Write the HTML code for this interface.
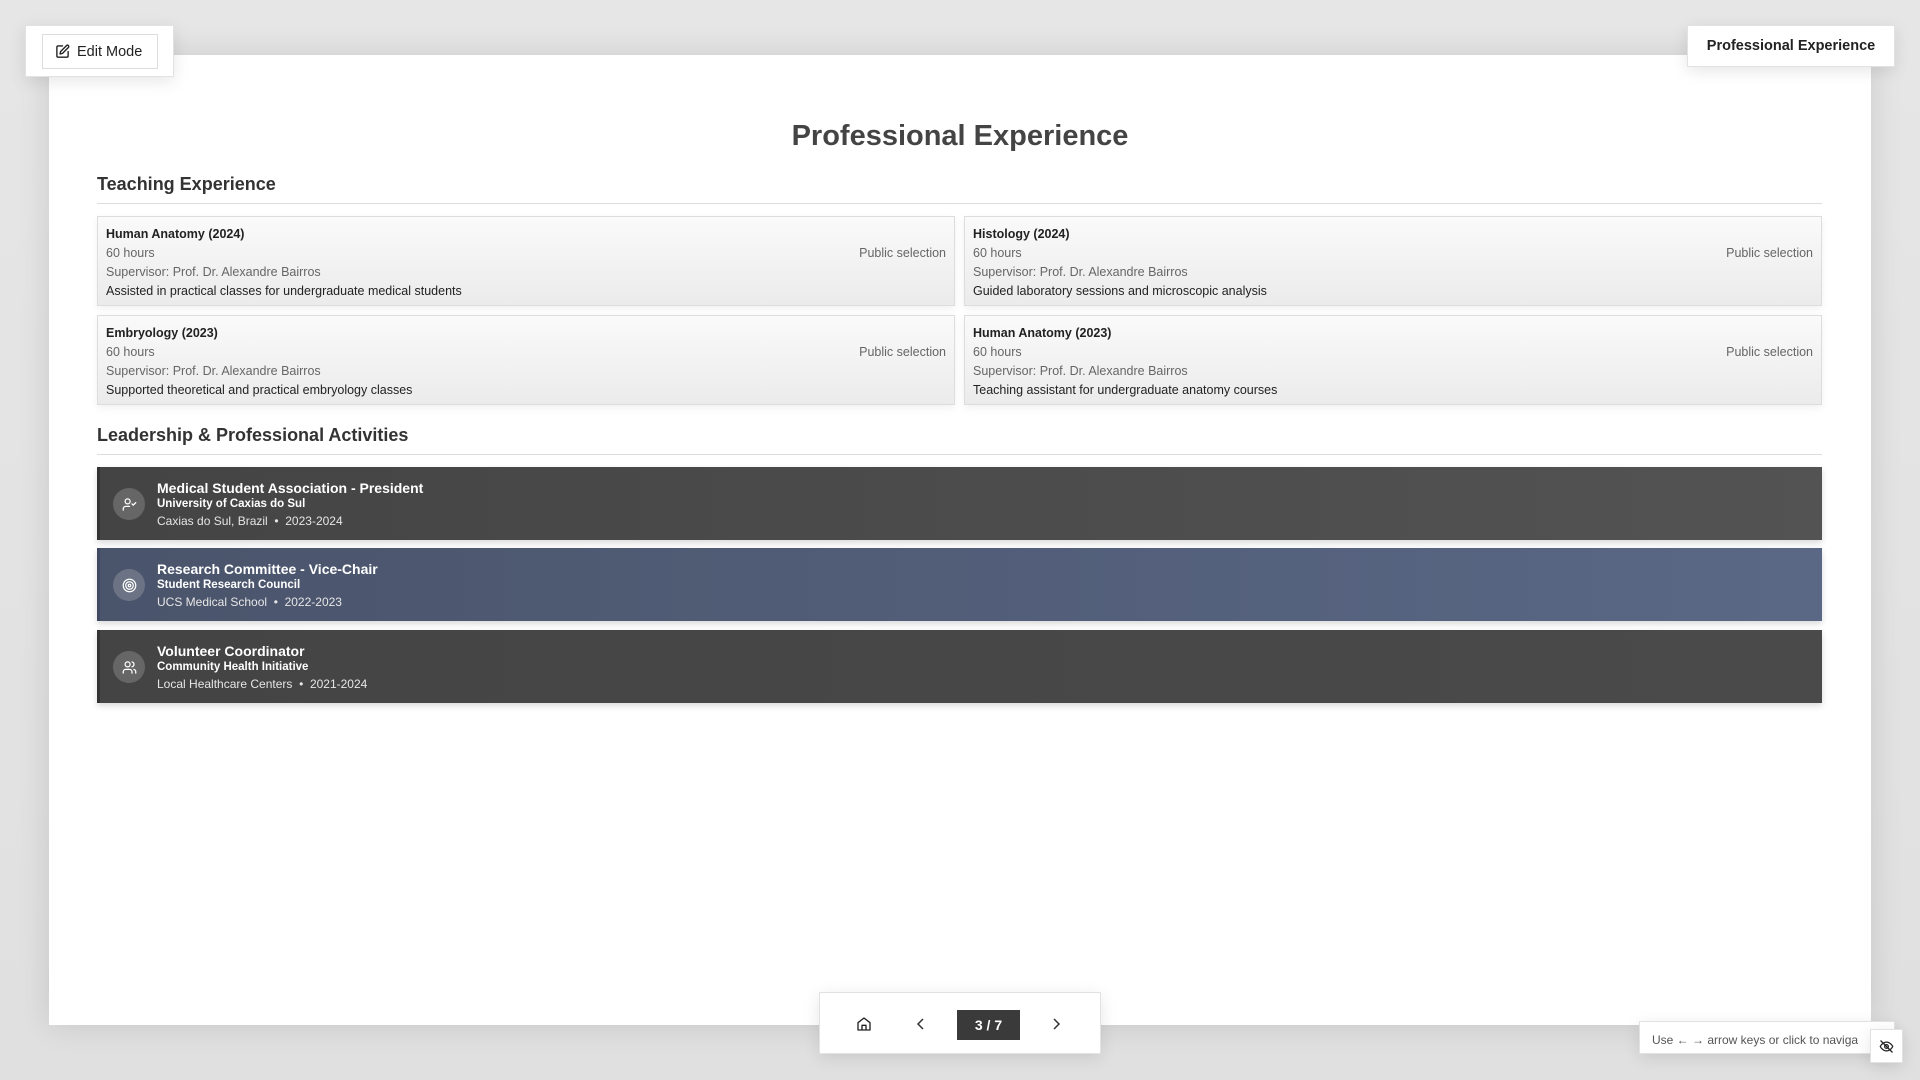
<!DOCTYPE html>
<html><head><meta charset="utf-8"><style>
*{box-sizing:border-box;margin:0;padding:0}
body{width:1920px;height:1080px;overflow:hidden;background:linear-gradient(#e6e6e6,#e0e0e0);font-family:"Liberation Sans",Arial,sans-serif;position:relative}
.slide{position:absolute;left:49px;top:55px;width:1822px;height:970px;background:#fff;box-shadow:0 0 30px rgba(0,0,0,.12)}
.panel{position:absolute;background:#fff;box-shadow:0 4px 16px rgba(0,0,0,.1);border:1px solid #e2e2e2}
h1{position:absolute;left:0;width:1920px;top:120px;text-align:center;font-size:29px;color:#444;font-weight:bold}
h2{position:absolute;left:97px;font-size:18px;color:#333;font-weight:bold}
.hr{position:absolute;left:97px;width:1725px;height:1px;background:#ddd}
.card{position:absolute;width:858px;height:90px;border:1px solid #ddd;background:linear-gradient(#fafafa,#ebebeb);box-shadow:0 3px 8px rgba(0,0,0,.06);font-size:12.5px;color:#666}
.card div{position:absolute;left:8px;white-space:nowrap}
.card .t{top:10px;font-weight:bold;color:#222}
.card .h{top:29px}.card .s{top:48px}.card .d{top:67px;color:#222}
.card .p{right:8px;left:auto;top:29px}
.act{position:absolute;left:97px;width:1725px;height:73px;border-left:3px solid #333;box-shadow:0 3px 6px rgba(0,0,0,.15);color:#fff}
.act .ic{position:absolute;left:13px;top:21px;width:32px;height:32px;border-radius:50%;background:#666;display:flex;align-items:center;justify-content:center}
.act .a{position:absolute;left:57px;top:13px;font-size:14px;font-weight:bold}
.act .b{position:absolute;left:57px;top:31px;font-size:11.5px;font-weight:bold}
.act .c{position:absolute;left:57px;top:47px;font-size:12px;color:#e6e6e6}
</style></head><body>
<div class="slide"></div>
<div class="panel" style="left:25px;top:25px;width:149px;height:52px"><div style="position:absolute;left:16px;top:8px;width:116px;height:35px;border:1px solid #ddd;font-size:14.5px;color:#222;display:flex;align-items:center;padding-left:12px;gap:7px"><svg width="15" height="15" viewBox="0 0 24 24" fill="none" stroke="#222" stroke-width="2.2" stroke-linecap="round" stroke-linejoin="round"><path d="M12 3H5a2 2 0 0 0-2 2v14a2 2 0 0 0 2 2h14a2 2 0 0 0 2-2v-7"/><path d="M18.4 2.6a2.1 2.1 0 0 1 3 3L12 15l-4 1 1-4z"/></svg>Edit Mode</div></div>
<div class="panel" style="left:1687px;top:25px;width:208px;height:42px;font-size:14.5px;font-weight:bold;color:#222;display:flex;align-items:center;justify-content:center">Professional Experience</div>
<h1>Professional Experience</h1>
<h2 style="top:174px">Teaching Experience</h2><div class="hr" style="top:203px"></div>
<div class="card" style="left:97px;top:216px"><div class="t">Human Anatomy (2024)</div><div class="h">60 hours</div><div class="p">Public selection</div><div class="s">Supervisor: Prof. Dr. Alexandre Bairros</div><div class="d">Assisted in practical classes for undergraduate medical students</div></div>
<div class="card" style="left:964px;top:216px"><div class="t">Histology (2024)</div><div class="h">60 hours</div><div class="p">Public selection</div><div class="s">Supervisor: Prof. Dr. Alexandre Bairros</div><div class="d">Guided laboratory sessions and microscopic analysis</div></div>
<div class="card" style="left:97px;top:315px"><div class="t">Embryology (2023)</div><div class="h">60 hours</div><div class="p">Public selection</div><div class="s">Supervisor: Prof. Dr. Alexandre Bairros</div><div class="d">Supported theoretical and practical embryology classes</div></div>
<div class="card" style="left:964px;top:315px"><div class="t">Human Anatomy (2023)</div><div class="h">60 hours</div><div class="p">Public selection</div><div class="s">Supervisor: Prof. Dr. Alexandre Bairros</div><div class="d">Teaching assistant for undergraduate anatomy courses</div></div>
<h2 style="top:425px">Leadership &amp; Professional Activities</h2><div class="hr" style="top:454px"></div>
<div class="act" style="top:467px;background:linear-gradient(90deg,#444,#535353)"><div class="ic"><svg width="15" height="15" viewBox="0 0 24 24" fill="none" stroke="#fff" stroke-width="2" stroke-linecap="round"><circle cx="9" cy="7" r="4"/><path d="M2 21v-2a4 4 0 0 1 4-4h6"/><path d="M16 11l2 2 4-4"/></svg></div><div class="a">Medical Student Association - President</div><div class="b">University of Caxias do Sul</div><div class="c">Caxias do Sul, Brazil &nbsp;•&nbsp; 2023-2024</div></div>
<div class="act" style="top:548px;background:linear-gradient(90deg,#4a546b,#5a6886);border-left-color:#3f4a62"><div class="ic" style="background:#6b7385"><svg width="15" height="15" viewBox="0 0 24 24" fill="none" stroke="#fff" stroke-width="2"><circle cx="12" cy="12" r="10"/><circle cx="12" cy="12" r="6"/><circle cx="12" cy="12" r="2"/></svg></div><div class="a">Research Committee - Vice-Chair</div><div class="b">Student Research Council</div><div class="c">UCS Medical School &nbsp;•&nbsp; 2022-2023</div></div>
<div class="act" style="top:630px;background:linear-gradient(90deg,#444,#4a4a4a)"><div class="ic"><svg width="15" height="15" viewBox="0 0 24 24" fill="none" stroke="#fff" stroke-width="2" stroke-linecap="round"><circle cx="9" cy="7" r="4"/><path d="M2 21v-2a4 4 0 0 1 4-4h6a4 4 0 0 1 4 4v2"/><path d="M16 3.1a4 4 0 0 1 0 7.8M22 21v-2a4 4 0 0 0-3-3.9"/></svg></div><div class="a">Volunteer Coordinator</div><div class="b">Community Health Initiative</div><div class="c">Local Healthcare Centers &nbsp;•&nbsp; 2021-2024</div></div>
<div class="panel" style="left:819px;top:992px;width:282px;height:62px">
<svg style="position:absolute;left:36px;top:23px" width="16" height="16" viewBox="0 0 24 24" fill="none" stroke="#222" stroke-width="2" stroke-linejoin="round"><path d="M3 10l9-7 9 7v11H3z"/><path d="M9 21v-7h6v7"/></svg>
<svg style="position:absolute;left:95px;top:24px" width="12" height="14" viewBox="0 0 12 14" fill="none" stroke="#333" stroke-width="1.5"><path d="M8 2L3 7l5 5"/></svg>
<div style="position:absolute;left:137px;top:17px;width:63px;height:30px;background:#3a3a3a;color:#fff;font-weight:bold;font-size:14px;display:flex;align-items:center;justify-content:center">3 / 7</div>
<svg style="position:absolute;left:230px;top:24px" width="12" height="14" viewBox="0 0 12 14" fill="none" stroke="#333" stroke-width="1.5"><path d="M4 2l5 5-5 5"/></svg>
</div>
<div class="panel" style="left:1639px;top:1021px;width:256px;height:33px;font-size:12px;color:#555;padding:11px 0 0 12px;white-space:nowrap;overflow:hidden">Use ← → arrow keys or click to naviga</div>
<div class="panel" style="left:1870px;top:1029px;width:33px;height:34px;display:flex;align-items:center;justify-content:center"><svg width="15" height="15" viewBox="0 0 24 24" fill="none" stroke="#222" stroke-width="2" stroke-linecap="round"><path d="M2 12s3.5-7 10-7 10 7 10 7-3.5 7-10 7S2 12 2 12z"/><circle cx="12" cy="12" r="3"/><path d="M3 3l18 18"/></svg></div>
</body></html>
